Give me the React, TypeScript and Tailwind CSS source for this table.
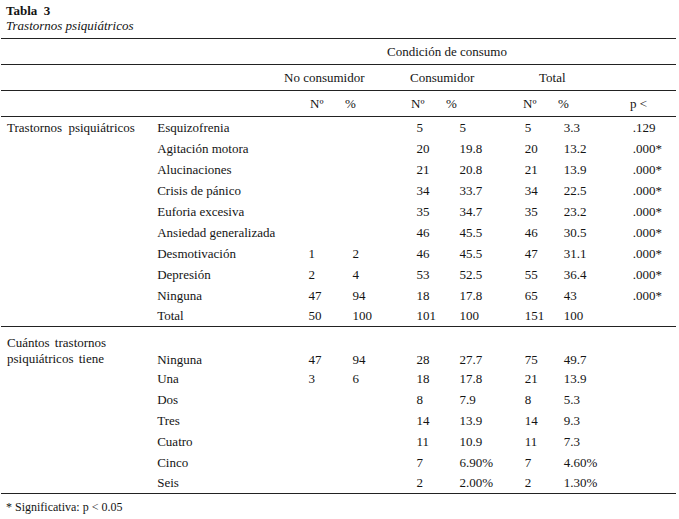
import React from "react"

type Row = [string, string, string, string, string, string, string, string]

// label, nc Nº, nc %, c Nº, c %, t Nº, t %, p
const trastornos: Row[] = [
  ["Esquizofrenia", "", "", "5", "5", "5", "3.3", ".129"],
  ["Agitación motora", "", "", "20", "19.8", "20", "13.2", ".000*"],
  ["Alucinaciones", "", "", "21", "20.8", "21", "13.9", ".000*"],
  ["Crisis de pánico", "", "", "34", "33.7", "34", "22.5", ".000*"],
  ["Euforia excesiva", "", "", "35", "34.7", "35", "23.2", ".000*"],
  ["Ansiedad generalizada", "", "", "46", "45.5", "46", "30.5", ".000*"],
  ["Desmotivación", "1", "2", "46", "45.5", "47", "31.1", ".000*"],
  ["Depresión", "2", "4", "53", "52.5", "55", "36.4", ".000*"],
  ["Ninguna", "47", "94", "18", "17.8", "65", "43", ".000*"],
  ["Total", "50", "100", "101", "100", "151", "100", ""],
]

const cuantos: Row[] = [
  ["Ninguna", "47", "94", "28", "27.7", "75", "49.7", ""],
  ["Una", "3", "6", "18", "17.8", "21", "13.9", ""],
  ["Dos", "", "", "8", "7.9", "8", "5.3", ""],
  ["Tres", "", "", "14", "13.9", "14", "9.3", ""],
  ["Cuatro", "", "", "11", "10.9", "11", "7.3", ""],
  ["Cinco", "", "", "7", "6.90%", "7", "4.60%", ""],
  ["Seis", "", "", "2", "2.00%", "2", "1.30%", ""],
]

function Cells({ r }: { r: Row }) {
  return (
    <>
      <td className="pl-[6px] whitespace-nowrap">{r[0]}</td>
      {r.slice(1).map((v, i) => (
        <td key={i} className="pl-[5px] whitespace-nowrap">{v}</td>
      ))}
    </>
  )
}

export default function App() {
  return (
    <div className="w-[679px] h-[519px] bg-white text-[#141414] text-[13px] font-['Liberation_Serif',serif]">
      <div className="pl-[6px] pt-[3px] leading-[15px]">
        <div className="font-bold">Tabla&nbsp;&nbsp;3</div>
        <div className="italic">Trastornos psiquiátricos</div>
      </div>

      <table className="mt-[5px] ml-[1px] w-[675px] table-fixed border-collapse leading-[15px]">
        <colgroup>
          <col className="w-[150px]" />
          <col className="w-[152px]" />
          <col className="w-[44px]" />
          <col className="w-[64px]" />
          <col className="w-[43px]" />
          <col className="w-[65px]" />
          <col className="w-[39px]" />
          <col className="w-[69px]" />
          <col className="w-[48px]" />
        </colgroup>
        <thead>
          <tr className="h-[26px] border-t border-[#222]">
            <td colSpan={9}>
              <div className="flex">
                <span className="w-[386px]" />
                <span>Condición de consumo</span>
              </div>
            </td>
          </tr>
          <tr className="h-[26px] border-t border-[#222]">
            <td colSpan={9}>
              <div className="flex">
                <span className="w-[283px]" />
                <span className="w-[126px]">No consumidor</span>
                <span className="w-[129px]">Consumidor</span>
                <span>Total</span>
              </div>
            </td>
          </tr>
          <tr className="h-[26px] border-t border-[#222]">
            <td colSpan={9}>
              <div className="flex">
                <span className="w-[309px]" />
                <span className="w-[35px]">Nº</span>
                <span className="w-[66px]">%</span>
                <span className="w-[35px]">Nº</span>
                <span className="w-[77px]">%</span>
                <span className="w-[35px]">Nº</span>
                <span className="w-[72px]">%</span>
                <span>p &lt;</span>
              </div>
            </td>
          </tr>
        </thead>
        <tbody className="border-t border-[#222]">
          {trastornos.map((r, i) => (
            <tr key={i} className="h-[21px]">
              {i === 0 ? (
                <td className="pl-[6px] whitespace-nowrap [word-spacing:3px]">Trastornos psiquiátricos</td>
              ) : (
                <td />
              )}
              <Cells r={r} />
            </tr>
          ))}
        </tbody>
        <tbody className="border-t border-b border-[#222]">
          {cuantos.map((r, i) =>
            i === 0 ? (
              <tr key={i} className="h-[42px] align-bottom">
                <td className="pl-[6px] pb-[2px] leading-[16px] [word-spacing:2px]">
                  Cuántos trastornos
                  <br />
                  psiquiátricos tiene
                </td>
                {[r[0], ...r.slice(1)].map((v, j) => (
                  <td key={j} className={`${j === 0 ? "pl-[6px]" : "pl-[5px]"} pb-[2px] whitespace-nowrap`}>
                    {v}
                  </td>
                ))}
              </tr>
            ) : (
              <tr key={i} className="h-[20.8px]">
                <td />
                <Cells r={r} />
              </tr>
            )
          )}
        </tbody>
      </table>

      <div className="pl-[6px] pt-[6px] text-[12px] leading-[15px]">* Significativa: p &lt; 0.05</div>
    </div>
  )
}
